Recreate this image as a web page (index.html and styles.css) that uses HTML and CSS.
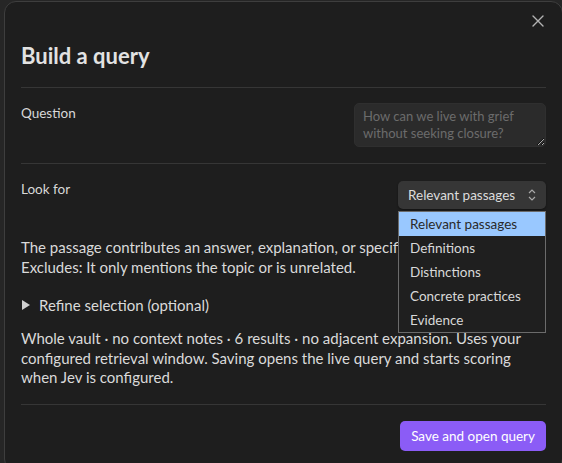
FILE: index.html
```html
<!DOCTYPE html>
<html lang="en">
<head>
  <meta charset="UTF-8">
  <title>Build a query</title>
  <meta name="viewport" content="width=device-width, initial-scale=1.0">
  <link rel="stylesheet" href="styles.css">
</head>
<body>
<div class="modal">

  <button class="modal-close" aria-label="Close">
    <svg width="12" height="12" viewBox="0 0 12 12">
      <path d="M1 1 L11 11 M11 1 L1 11" stroke="#b3b3b3" stroke-width="1.4" fill="none" stroke-linecap="round"/>
    </svg>
  </button>

  <h2 class="modal-title">Build a query</h2>

  <!-- Question -->
  <div class="setting-item">
    <div class="setting-name">Question</div>
    <div class="setting-control">
      <textarea class="question-input" placeholder="How can we live with grief without seeking closure?"></textarea>
    </div>
  </div>

  <!-- Look for -->
  <div class="setting-item no-border">
    <div class="setting-name look-label">Look for</div>
    <div class="setting-control">
      <div class="select-wrap">
        <div class="fake-select">
          <span>Relevant passages</span>
          <svg width="10" height="14" viewBox="0 0 10 14">
            <path d="M2 5 L5 2 L8 5 M2 9 L5 12 L8 9" stroke="#a8a8a8" stroke-width="1.2" fill="none"/>
          </svg>
        </div>
        <ul class="select-menu">
          <li class="selected">Relevant passages</li>
          <li>Definitions</li>
          <li>Distinctions</li>
          <li>Concrete practices</li>
          <li>Evidence</li>
        </ul>
      </div>
    </div>
  </div>

  <p class="look-desc">The passage contributes an answer, explanation, or specific support.<br>Excludes: It only mentions the topic or is unrelated.</p>

  <details class="refine">
    <summary>Refine selection (optional)</summary>
  </details>

  <p class="summary-text">Whole vault · no context notes · 6 results · no adjacent expansion. Uses your configured retrieval window. Saving opens the live query and starts scoring when Jev is configured.</p>

  <div class="modal-buttons">
    <button class="btn-cta">Save and open query</button>
  </div>

</div>
</body>
</html>
```

FILE: styles.css
```css
html, body {
  margin: 0;
  height: 100%;
  overflow: hidden;
}

body {
  background: #262626;
  font-family: Lato, "Open Sans", sans-serif;
  color: #dadada;
}

.modal {
  position: relative;
  box-sizing: border-box;
  width: 559px;
  height: 470px;
  margin: 1px 0 0 4px;
  padding: 0 16px;
  background: #1e1e1e;
  border: 1px solid #3e3e3e;
  border-radius: 12px;
}

.modal-close {
  position: absolute;
  top: 12px;
  right: 17px;
  width: 14px;
  height: 14px;
  padding: 1px;
  border: none;
  background: none;
  display: flex;
  align-items: center;
  justify-content: center;
}

.modal-title {
  margin: 0;
  padding: 40px 0 17px;
  font-size: 22px;
  line-height: 28px;
  font-weight: 700;
  color: #e2e2e2;
  border-bottom: 1px solid #363636;
}

.setting-item {
  display: flex;
  justify-content: space-between;
  align-items: flex-start;
  padding: 15px 0 16px;
  border-bottom: 1px solid #363636;
}

.setting-item.no-border {
  border-bottom: none;
  padding-top: 17px;
}

.setting-name {
  font-size: 13.5px;
  line-height: 18px;
  padding-top: 1px;
  color: #d8d8d8;
}

.look-label {
  padding-top: 0;
  margin-top: -1px;
}

.question-input {
  box-sizing: border-box;
  width: 192px;
  height: 44px;
  display: block;
  padding: 4px 8px;
  background: #2b2b2b;
  border: 1px solid #2f2f2f;
  border-radius: 5px;
  font-family: inherit;
  font-size: 13px;
  line-height: 17px;
  color: #dadada;
}

.question-input::placeholder {
  color: #6c6c6c;
}

.select-wrap {
  position: relative;
}

.fake-select {
  box-sizing: border-box;
  width: 148px;
  height: 28px;
  display: flex;
  align-items: center;
  justify-content: space-between;
  padding: 0 9px 0 10px;
  background: #363636;
  border-radius: 5px;
  box-shadow: 0 1px 2px rgba(0,0,0,0.4);
  font-size: 13.5px;
  color: #dcdcdc;
}

.select-menu {
  position: absolute;
  top: 30px;
  left: 0;
  z-index: 2;
  box-sizing: border-box;
  width: 148px;
  margin: 0;
  padding: 0;
  list-style: none;
  background: #1f1f1f;
  border: 1px solid #6b6b6b;
}

.select-menu li {
  height: 24px;
  line-height: 24px;
  padding-left: 11px;
  font-size: 13.5px;
  color: #d8d8d8;
}

.select-menu li.selected {
  background: #99c8ff;
  color: #2a2a2a;
}

.look-desc {
  margin: 13px 0 0;
  font-size: 15px;
  line-height: 19.5px;
  color: #dadada;
}

.refine {
  margin-top: 18px;
  font-size: 15px;
  line-height: 20px;
}

.refine summary {
  list-style: none;
  display: flex;
  align-items: center;
  gap: 9px;
  color: #dadada;
}

.refine summary::before {
  content: "";
  width: 0;
  height: 0;
  border-top: 5px solid transparent;
  border-bottom: 5px solid transparent;
  border-left: 8px solid #d0d0d0;
  margin-left: 1px;
}

.summary-text {
  margin: 14px 0 0;
  padding-bottom: 16px;
  font-size: 15px;
  line-height: 19.5px;
  color: #dadada;
  border-bottom: 1px solid #363636;
}

.modal-buttons {
  display: flex;
  justify-content: flex-end;
  margin-top: 16px;
}

.btn-cta {
  height: 30px;
  padding: 0 11px;
  border: none;
  border-radius: 5px;
  background: #8b5cf6;
  color: #ffffff;
  font-family: inherit;
  font-size: 13.5px;
}
```
